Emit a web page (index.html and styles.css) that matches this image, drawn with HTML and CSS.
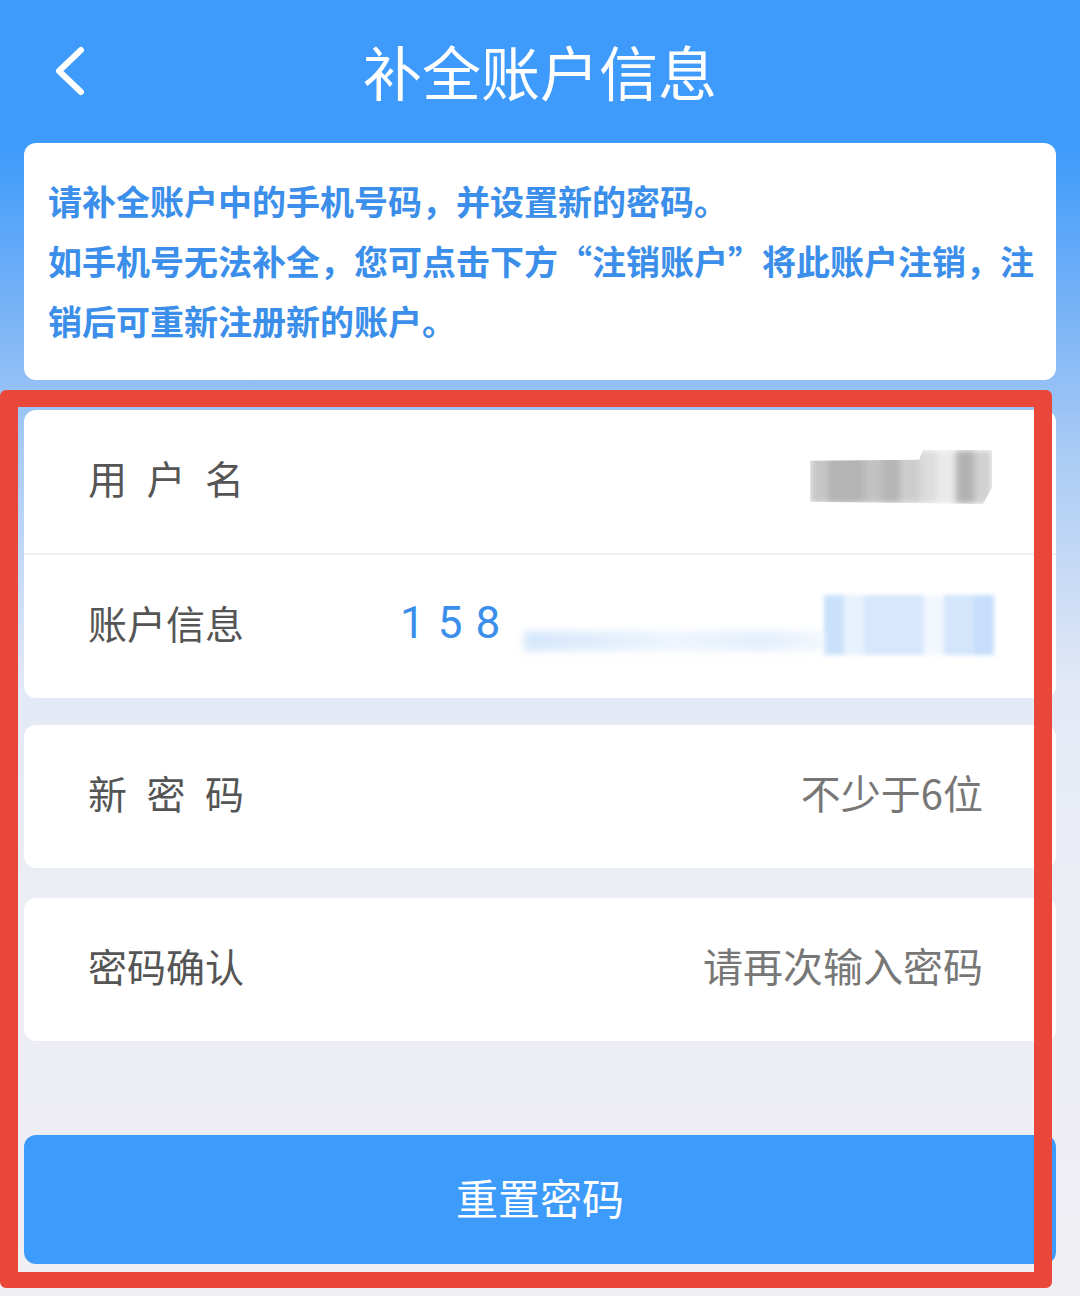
FILE: index.html
```html
<!DOCTYPE html>
<html lang="zh-CN">
<head>
<meta charset="utf-8">
<title>补全账户信息</title>
<link rel="stylesheet" href="styles.css">
</head>
<body>
<div class="page">
  <header class="topbar">
    <svg class="back" viewBox="0 0 40 50" width="40" height="50" aria-hidden="true">
      <path d="M31 4 L9 25 L31 46" fill="none" stroke="#ffffff" stroke-width="6" stroke-linecap="round" stroke-linejoin="round"/>
    </svg>
    <h1 class="title">补全账户信息</h1>
  </header>

  <main class="content">
    <section class="notice">
      <p>请补全账户中的手机号码，并设置新的密码。<br>如手机号无法补全，您可点击下方“注销账户”将此账户注销，注<br>销后可重新注册新的账户。</p>
    </section>

    <section class="card">
      <div class="row">
        <span class="label">用户名</span>
        <span class="blur-gray"></span>
      </div>
      <div class="divider"></div>
      <div class="row">
        <span class="label nojust">账户信息</span>
        <span class="phone">158</span>
        <span class="blur-blue"></span>
      </div>
    </section>

    <section class="card single">
      <div class="row">
        <span class="label">新密码</span>
        <span class="placeholder">不少于6位</span>
      </div>
    </section>

    <section class="card single">
      <div class="row">
        <span class="label nojust">密码确认</span>
        <span class="placeholder">请再次输入密码</span>
      </div>
    </section>

    <button class="submit">重置密码</button>
  </main>

  <div class="annotation"></div>
</div>
</body>
</html>
```

FILE: styles.css
```css
html, body {
  margin: 0;
  padding: 0;
}
body {
  width: 1080px;
  height: 1296px;
  overflow: hidden;
  font-family: "Noto Sans CJK SC", "Noto Sans", sans-serif;
  background: linear-gradient(to bottom,
    #3f9bfb 0px,
    #3f9bfb 150px,
    #7fb6f6 330px,
    #a9cbf5 450px,
    #e3e9f6 690px,
    #eceef5 900px,
    #efeff4 1296px);
}
.page {
  position: relative;
  width: 1080px;
  height: 1296px;
}
.topbar {
  height: 143px;
  display: flex;
  align-items: center;
  justify-content: center;
  position: relative;
}
.back {
  position: absolute;
  left: 50px;
  top: 46px;
}
.title {
  margin: 0;
  margin-top: -3px;
  color: #ffffff;
  font-size: 59px;
  font-weight: 400;
  letter-spacing: 0;
  line-height: 1;
}
.content {
  padding: 0 24px;
  display: flex;
  flex-direction: column;
}
.notice {
  background: #ffffff;
  border-radius: 12px;
  padding: 28px 10px 29px 24px;
  height: 180px;
  margin-bottom: 30px;
}
.notice p {
  margin: 0;
  color: #3b8ee9;
  font-size: 34px;
  font-weight: 700;
  line-height: 60px;
  letter-spacing: 0;
  white-space: nowrap;
}
.card {
  background: #ffffff;
  border-radius: 12px;
  margin-bottom: 27px;
}
.card.single {
  margin-bottom: 30px;
}
.card + .card.single + .card.single {
  margin-bottom: 94px;
}
.row {
  height: 143px;
  box-sizing: border-box;
  display: flex;
  align-items: center;
  padding: 0 73px 9px 64px;
  position: relative;
}
.card:first-of-type .row:first-child {
  height: 142px;
}
.divider {
  height: 2px;
  background: #eff0f3;
}
.label {
  width: 156px;
  color: #555555;
  font-size: 39px;
  line-height: 1;
  text-align: justify;
  text-align-last: justify;
  flex: none;
}
.label.nojust {
  text-align: left;
  text-align-last: auto;
  white-space: nowrap;
}
.placeholder {
  margin-left: auto;
  color: #777777;
  font-size: 40px;
  line-height: 1;
}
.phone {
  margin-left: 156px;
  color: #3b8ee9;
  font-family: "Roboto", "Noto Sans", sans-serif;
  font-size: 44px;
  letter-spacing: 13px;
  line-height: 1;
  margin-top: 2px;
}
.blur-gray {
  position: absolute;
  left: 786px;
  top: 40px;
  width: 182px;
  height: 54px;
  background:
    linear-gradient(to right,
      #bdbdbd 0 18px, #a7a7a7 18px 54px, #b8b8b8 54px 72px, #a9a9a9 72px 90px,
      #c5c5c5 90px 110px, #d6d6d6 110px 126px, #e6e6e6 126px 146px, #a4a4a4 146px 164px, #c9c9c9 164px 182px);
  clip-path: polygon(0 20%, 60% 18%, 62% 0, 100% 0, 100% 70%, 95% 100%, 0 96%);
  filter: blur(3px);
  opacity: 0.85;
}
.blur-blue {
  position: absolute;
  left: 500px;
  top: 40px;
  width: 470px;
  height: 60px;
  background:
    linear-gradient(to right,
      rgba(255,255,255,0) 0 300px,
      #c9e1fb 300px 320px, #e8f2fd 320px 340px, #d7e8fc 340px 400px,
      #f2f7fe 400px 420px, #d4e6fc 420px 450px, #c6defb 450px 470px);
  filter: blur(2px);
}
.blur-blue::before {
  content: "";
  position: absolute;
  left: 0;
  top: 36px;
  width: 300px;
  height: 20px;
  background: linear-gradient(to right, #d4e6fb, #eef5fd 50%, #e4eefb 80%, #f4f8fe);
  filter: blur(3px);
}
.submit {
  height: 129px;
  border: none;
  border-radius: 12px;
  background: #3d9bfb;
  color: #ffffff;
  font-family: "Noto Sans CJK SC", "Noto Sans", sans-serif;
  font-size: 42px;
  padding: 0 0 6px 0;
  margin: 0;
}
.annotation {
  position: absolute;
  left: 0;
  top: 390px;
  width: 1052px;
  height: 898px;
  box-sizing: border-box;
  border-style: solid;
  border-color: #e8473a;
  border-width: 17px 18px 16px 18px;
  border-radius: 6px;
  pointer-events: none;
}
```
